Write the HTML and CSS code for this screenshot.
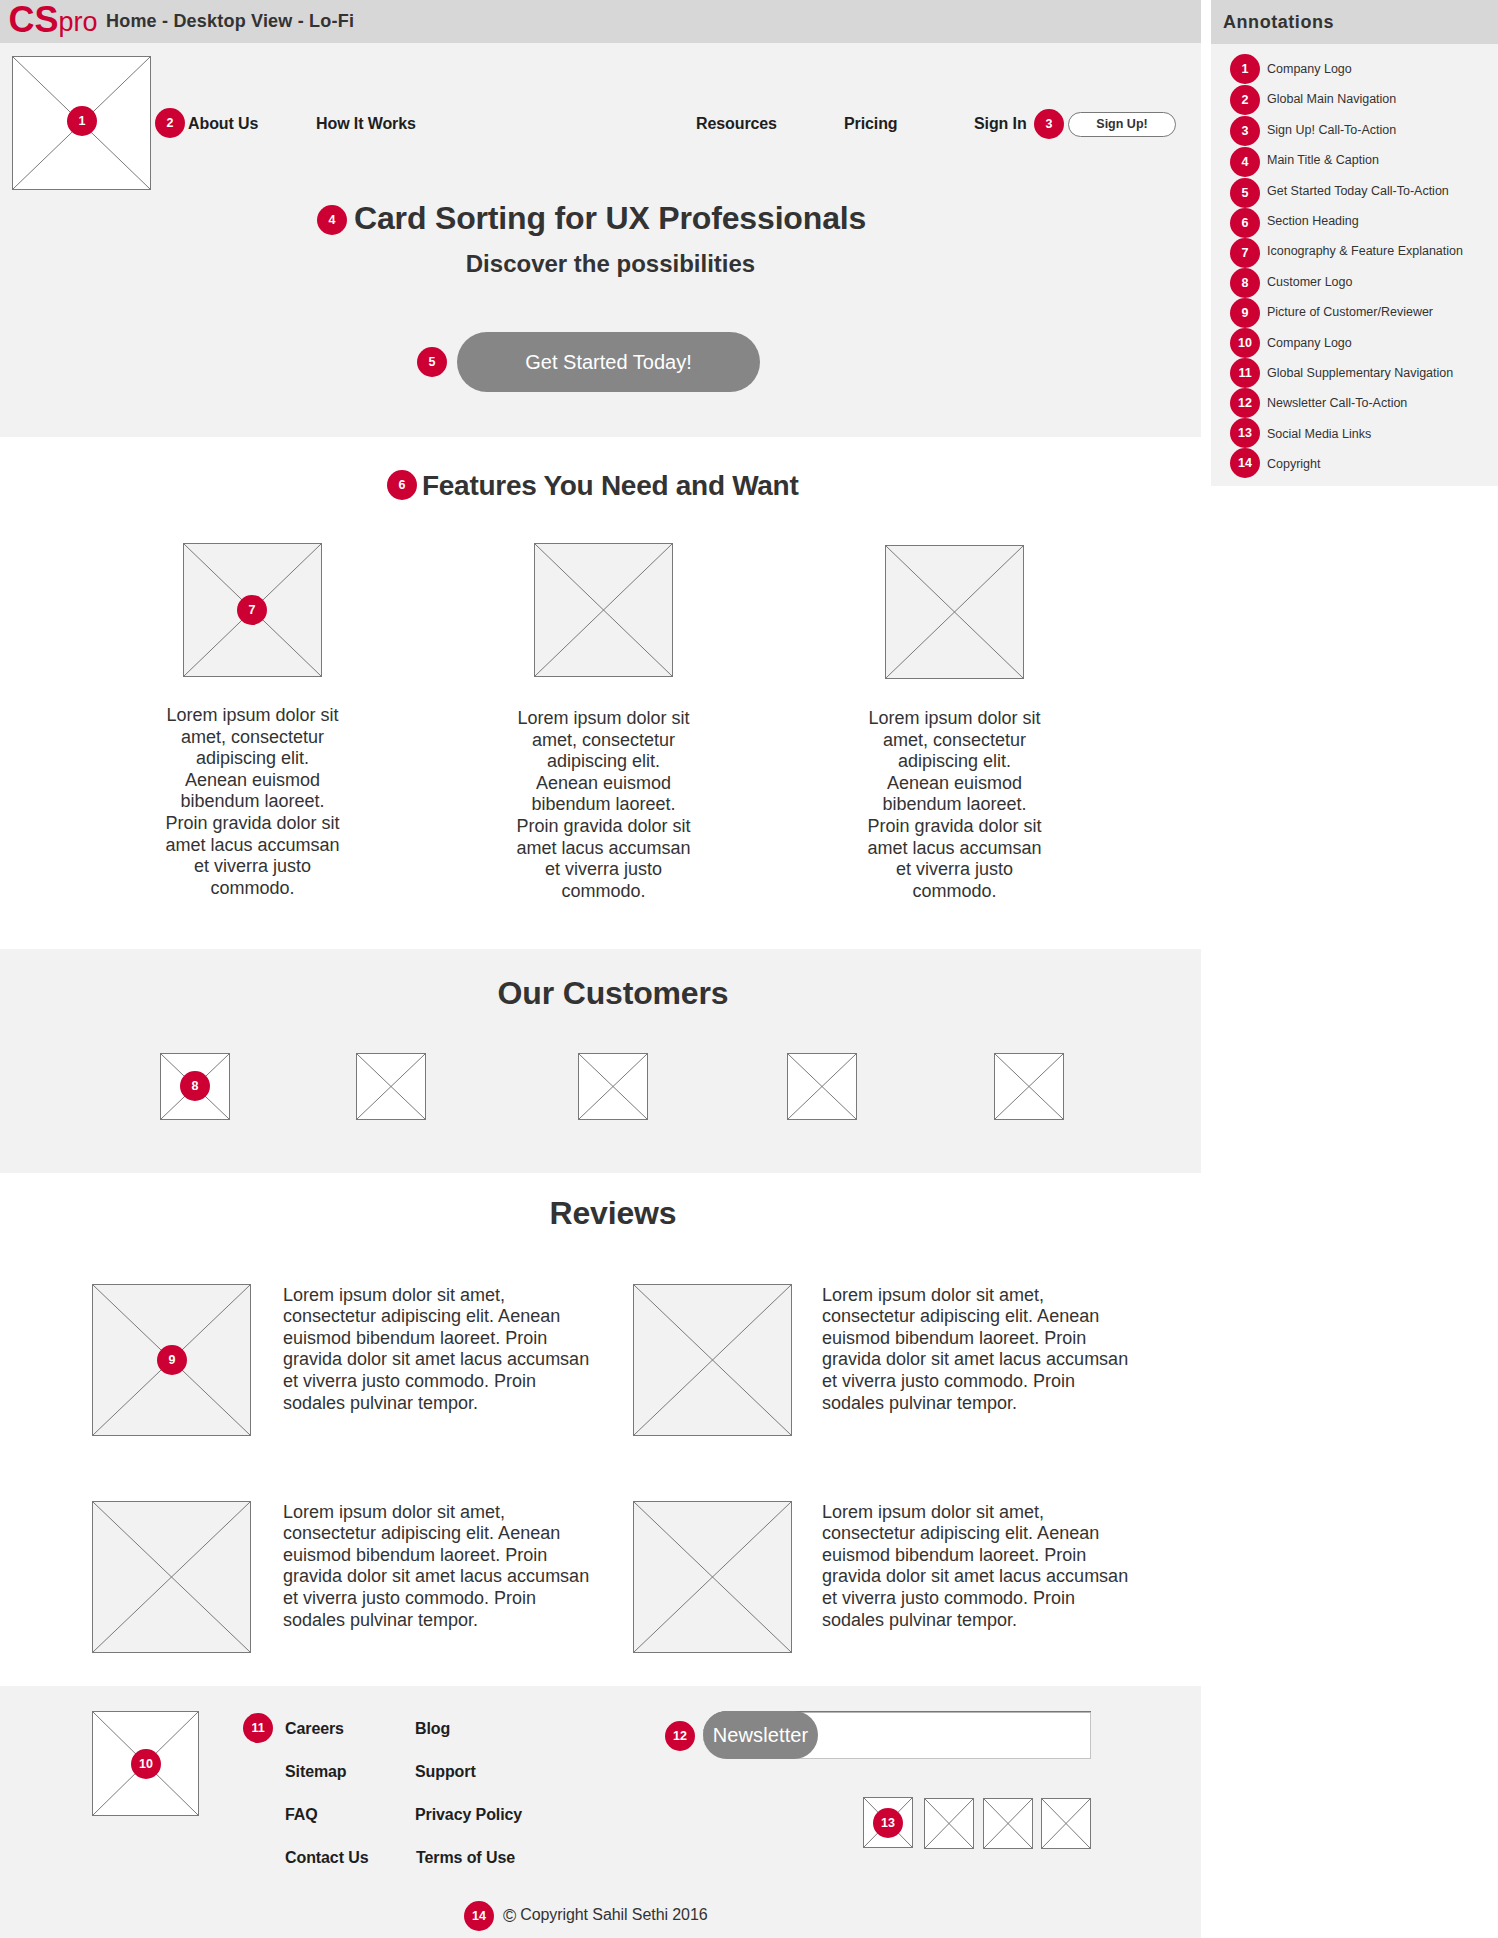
FILE: index.html
```html
<!DOCTYPE html>
<html lang="en">
<head>
<meta charset="utf-8">
<title>CSpro Home - Desktop View - Lo-Fi</title>
<link rel="stylesheet" href="styles.css">
</head>
<body>
<svg class="defs" width="0" height="0">
  <symbol id="cross" viewBox="0 0 100 100" preserveAspectRatio="none">
    <path d="M0 0L100 100M100 0L0 100" fill="none" stroke="#797979" stroke-width="1" vector-effect="non-scaling-stroke"/>
  </symbol>
</svg>
<div class="board">
  <div class="page">
    <div class="titlebar">
      <div class="brand"><b>CS</b><span>pro</span></div>
      <div class="view-name">Home - Desktop View - Lo-Fi</div>
    </div>

    <header class="hero">
      <div class="topnav">
        <div class="ph ph-logo"><svg><use href="#cross"/></svg><span class="badge pin-logo">1</span></div>
        <span class="badge nav-badge">2</span>
        <nav class="links">
          <a>About Us</a><a>How It Works</a><a>Resources</a><a>Pricing</a><a>Sign In</a>
        </nav>
        <span class="badge signup-badge">3</span>
        <button class="signup">Sign Up!</button>
      </div>
      <div class="headline"><span class="badge">4</span><h1>Card Sorting for UX Professionals</h1></div>
      <p class="subtitle">Discover the possibilities</p>
      <div class="cta-row"><span class="badge">5</span><button class="cta">Get Started Today!</button></div>
    </header>

    <section class="features">
      <div class="features-head"><span class="badge">6</span><h2>Features You Need and Want</h2></div>
      <div class="feature-grid">
        <div class="feature first">
          <div class="ph ph-feature"><svg><use href="#cross"/></svg><span class="badge pin-feature">7</span></div>
          <p>Lorem ipsum dolor sit amet, consectetur adipiscing elit. Aenean euismod bibendum laoreet. Proin gravida dolor sit amet lacus accumsan et viverra justo commodo.</p>
        </div>
        <div class="feature">
          <div class="ph ph-feature"><svg><use href="#cross"/></svg></div>
          <p>Lorem ipsum dolor sit amet, consectetur adipiscing elit. Aenean euismod bibendum laoreet. Proin gravida dolor sit amet lacus accumsan et viverra justo commodo.</p>
        </div>
        <div class="feature last">
          <div class="ph ph-feature"><svg><use href="#cross"/></svg></div>
          <p>Lorem ipsum dolor sit amet, consectetur adipiscing elit. Aenean euismod bibendum laoreet. Proin gravida dolor sit amet lacus accumsan et viverra justo commodo.</p>
        </div>
      </div>
    </section>

    <section class="customers">
      <h2>Our Customers</h2>
      <div class="customer-row">
        <div class="ph"><svg><use href="#cross"/></svg><span class="badge pin-customer">8</span></div>
        <div class="ph"><svg><use href="#cross"/></svg></div>
        <div class="ph"><svg><use href="#cross"/></svg></div>
        <div class="ph"><svg><use href="#cross"/></svg></div>
        <div class="ph"><svg><use href="#cross"/></svg></div>
      </div>
    </section>

    <section class="reviews">
      <h2>Reviews</h2>
      <div class="review-grid">
        <div class="ph"><svg><use href="#cross"/></svg><span class="badge pin-review">9</span></div>
        <p>Lorem ipsum dolor sit amet, consectetur adipiscing elit. Aenean euismod bibendum laoreet. Proin gravida dolor sit amet lacus accumsan et viverra justo commodo. Proin sodales pulvinar tempor.</p>
        <div class="ph"><svg><use href="#cross"/></svg></div>
        <p>Lorem ipsum dolor sit amet, consectetur adipiscing elit. Aenean euismod bibendum laoreet. Proin gravida dolor sit amet lacus accumsan et viverra justo commodo. Proin sodales pulvinar tempor.</p>
        <div class="ph"><svg><use href="#cross"/></svg></div>
        <p>Lorem ipsum dolor sit amet, consectetur adipiscing elit. Aenean euismod bibendum laoreet. Proin gravida dolor sit amet lacus accumsan et viverra justo commodo. Proin sodales pulvinar tempor.</p>
        <div class="ph"><svg><use href="#cross"/></svg></div>
        <p>Lorem ipsum dolor sit amet, consectetur adipiscing elit. Aenean euismod bibendum laoreet. Proin gravida dolor sit amet lacus accumsan et viverra justo commodo. Proin sodales pulvinar tempor.</p>
      </div>
    </section>

    <footer class="footer">
      <div class="footer-main">
        <div class="ph ph-footer"><svg><use href="#cross"/></svg><span class="badge pin-footer">10</span></div>
        <span class="badge links-badge">11</span>
        <ul class="footer-links"><li>Careers</li><li>Sitemap</li><li>FAQ</li><li>Contact Us</li></ul>
        <ul class="footer-links second"><li>Blog</li><li>Support</li><li>Privacy Policy</li><li class="terms">Terms of Use</li></ul>
        <div class="signup-area">
          <div class="newsletter">
            <span class="badge news-badge">12</span>
            <div class="news-field"><button class="news-button">Newsletter</button></div>
          </div>
          <div class="social">
            <div class="ph first"><svg><use href="#cross"/></svg><span class="badge pin-social">13</span></div>
            <div class="ph"><svg><use href="#cross"/></svg></div>
            <div class="ph"><svg><use href="#cross"/></svg></div>
            <div class="ph"><svg><use href="#cross"/></svg></div>
          </div>
        </div>
      </div>
      <div class="copyright"><span class="badge">14</span><span class="copy-text"><span class="copy-sign">©</span> Copyright Sahil Sethi 2016</span></div>
    </footer>
  </div>

  <aside class="annotations">
    <h3>Annotations</h3>
    <div class="legend">
      <div class="markers">
        <span class="badge">1</span><span class="badge">2</span><span class="badge">3</span><span class="badge">4</span><span class="badge">5</span><span class="badge">6</span><span class="badge">7</span><span class="badge">8</span><span class="badge">9</span><span class="badge">10</span><span class="badge">11</span><span class="badge">12</span><span class="badge">13</span><span class="badge">14</span>
      </div>
      <ol class="labels">
        <li>Company Logo</li>
        <li>Global Main Navigation</li>
        <li>Sign Up! Call-To-Action</li>
        <li>Main Title &amp; Caption</li>
        <li>Get Started Today Call-To-Action</li>
        <li>Section Heading</li>
        <li>Iconography &amp; Feature Explanation</li>
        <li>Customer Logo</li>
        <li>Picture of Customer/Reviewer</li>
        <li>Company Logo</li>
        <li>Global Supplementary Navigation</li>
        <li>Newsletter Call-To-Action</li>
        <li>Social Media Links</li>
        <li>Copyright</li>
      </ol>
    </div>
  </aside>
</div>
</body>
</html>
```
FILE: styles.css
```css
* { box-sizing: border-box; }
body {
  margin: 0;
  background: #fff;
  color: #333;
  font-family: "Liberation Sans", Arial, sans-serif;
}
h1, h2, h3, p, ul, ol { margin: 0; padding: 0; }
ul, ol { list-style: none; }
button { font-family: inherit; padding: 0; border: 0; }
.defs { position: absolute; }
.board { display: flex; align-items: flex-start; gap: 10px; width: 1498px; }
.page { width: 1201px; flex: none; }

/* numbered annotation markers */
.badge {
  display: block;
  flex: none;
  width: 30px;
  height: 30px;
  border-radius: 50%;
  background: #cc0033;
  color: #fff;
  font: bold 12.5px/31px "Liberation Sans", Arial, sans-serif;
  text-align: center;
}
.ph .badge { position: absolute; }

/* crossed image placeholders */
.ph { position: relative; flex: none; background: #fff; border: 1px solid #797979; }
.ph svg { display: block; width: 100%; height: 100%; }

.titlebar { display: flex; height: 43px; background: #d7d7d7; }
.brand { display: flex; width: 106px; padding-left: 8.5px; color: #cc0033; }
.brand b { font-size: 36px; line-height: 40px; }
.brand span { font-size: 27px; line-height: 44px; }
.view-name { font-size: 18px; font-weight: bold; line-height: 42px; letter-spacing: 0.2px; }

.hero { height: 394px; padding-top: 13px; background: #f2f2f2; }
.topnav { display: flex; align-items: flex-start; height: 134px; padding-left: 12px; }
.ph-logo { width: 139px; height: 134px; }
.pin-logo { left: 54px; top: 49px; }
.nav-badge { margin: 52px 0 0 4px; }
.links { display: grid; grid-template-columns: 128px 380px 148px 130px 60px; margin: 59px 0 0 3px; color: #1e1e1e; font-size: 16px; font-weight: bold; line-height: 18px; letter-spacing: -0.1px; white-space: nowrap; }
.signup-badge { margin-top: 53px; }
.signup { width: 108px; height: 25px; margin: 56px 0 0 4px; border: 1px solid #797979; border-radius: 13px; background: #fff; color: #333; font-size: 12.5px; font-weight: bold; line-height: 23px; }
.headline { display: flex; padding: 10px 0 0 317px; }
.headline .badge { margin-top: 5px; }
h1, .customers h2, .reviews h2 { font-size: 32px; line-height: 36px; font-weight: bold; letter-spacing: -0.16px; }
h1 { margin-left: 7px; white-space: nowrap; }
.subtitle { margin-top: 14px; padding-left: 20px; font-size: 24px; font-weight: bold; line-height: 27px; text-align: center; }
.cta-row { display: flex; align-items: center; gap: 10px; margin: 55px 0 0 417px; }
.cta { width: 303px; height: 60px; border-radius: 30px; background: #868686; color: #fff; font-size: 20px; line-height: 60px; }

.features { height: 512px; padding-top: 33px; }
.features-head { display: flex; gap: 5px; padding-left: 387px; }
.features-head h2 { font-size: 28px; line-height: 31px; letter-spacing: -0.28px; white-space: nowrap; }
.feature-grid { display: grid; grid-template-columns: repeat(3, 177px); column-gap: 174px; margin-top: 42px; padding-left: 164px; }
.feature { display: flex; flex-direction: column; align-items: center; gap: 31px; }
.feature.first { gap: 28px; }
.feature.last { gap: 29px; padding-top: 2px; }
.ph-feature { width: 139px; height: 134px; background: #f2f2f2; }
.pin-feature { left: 53px; top: 51px; }
.feature p { font-size: 18px; line-height: 21.6px; text-align: center; }

.customers { height: 224px; padding-top: 26px; background: #f2f2f2; }
.customers h2, .reviews h2 { padding-left: 25px; text-align: center; }
.customer-row { display: grid; grid-template-columns: 196px 222px 209px 207px 70px; margin-top: 42px; padding-left: 160px; }
.customer-row .ph { width: 70px; height: 67px; }
.pin-customer { left: 19px; top: 17px; }

.reviews { height: 513px; padding-top: 22px; }
.review-grid { display: grid; grid-template-columns: 159px 350px 159px 350px; grid-template-rows: 152px 152px; column-gap: 16px; row-gap: 65px; margin-top: 53px; padding-left: 92px; }
.review-grid .ph { background: #f2f2f2; }
.pin-review { left: 64px; top: 60px; }
.review-grid p { padding: 0.6px 14px 0 16px; font-size: 18px; line-height: 21.6px; }
.review-grid p:nth-child(4n) { padding-left: 14px; padding-right: 16px; }

.footer { height: 252px; padding-top: 21px; background: #f2f2f2; }
.footer-main { display: flex; align-items: flex-start; height: 194px; padding-left: 92px; }
.ph-footer { width: 107px; height: 105px; margin-top: 4px; }
.pin-footer { left: 38px; top: 37px; }
.links-badge { margin: 6px 0 0 44px; }
.footer-links { width: 130px; margin-left: 12px; color: #1e1e1e; font-size: 16px; font-weight: bold; line-height: 43px; letter-spacing: -0.1px; white-space: nowrap; }
.footer-links.second { width: 250px; margin-left: 0; }
.terms { padding-left: 1px; }
.signup-area { width: 427px; padding-top: 4px; }
.newsletter { display: flex; gap: 8px; }
.news-badge { margin-top: 10px; }
.news-field { width: 388px; height: 48px; border-radius: 24px 0 0 24px; background: #fff; box-shadow: inset 0 1px #767676, inset 0 2px #b5b5b5, inset -1px -1px #c4c4c4; }
.news-button { display: block; width: 115px; height: 48px; border-radius: 24px; background: #868686; color: #fff; font-size: 20px; line-height: 45px; letter-spacing: 0.12px; }
.social { display: grid; grid-template-columns: 61px 59px 58px 50px; margin-top: 38px; padding-left: 198px; }
.social .ph { width: 50px; height: 51px; margin-top: 1px; }
.social .ph.first { margin-top: 0; }
.pin-social { left: 9px; top: 10px; }
.copyright { display: flex; gap: 9px; padding-left: 464px; }
.copy-text { display: flex; gap: 4px; margin-top: 5px; font-size: 16px; line-height: 18px; letter-spacing: -0.08px; }
.copy-sign { font-size: 18px; line-height: 20px; }

.annotations { width: 287px; height: 486px; background: #f2f2f2; }
.annotations h3 { height: 44px; padding-left: 12px; background: #d7d7d7; font-size: 18px; line-height: 44px; letter-spacing: 0.55px; }
.legend { display: flex; gap: 7px; padding: 10px 0 0 19px; }
.markers { display: grid; grid-template-rows: repeat(4, 31px); grid-auto-rows: 30px; }
.labels { font-size: 12.5px; line-height: 30.4px; white-space: nowrap; }
```
